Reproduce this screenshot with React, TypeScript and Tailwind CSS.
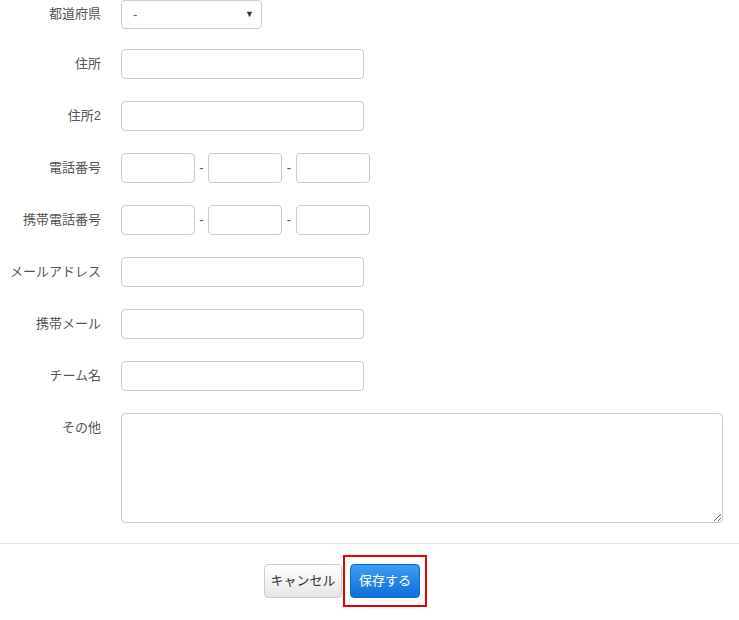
import React from "react";

const font = {
  fontFamily: '"Liberation Sans", "Noto Sans CJK JP", sans-serif',
};

function Label({ children }: { children: React.ReactNode }) {
  return (
    <div className="w-[101px] shrink-0 text-right text-[13px] leading-[16px] pt-[7px] text-[#555]">
      {children}
    </div>
  );
}

function Input({ w }: { w: string }) {
  return (
    <input
      type="text"
      className={`${w} h-[30px] rounded-[4px] border border-[#cccccc] bg-white outline-none`}
    />
  );
}

function Phone() {
  return (
    <div className="ml-[20px] flex items-center">
      <Input w="w-[74px]" />
      <span className="w-[13px] text-center text-[13px] text-[#555]">-</span>
      <Input w="w-[74px]" />
      <span className="w-[14px] text-center text-[13px] text-[#555]">-</span>
      <Input w="w-[74px]" />
    </div>
  );
}

export default function App() {
  return (
    <div className="w-[739px] h-[620px] overflow-hidden bg-white" style={font}>
      <div className="flex flex-col">
        <div className="flex items-start">
          <div className="w-[101px] shrink-0 text-right text-[13px] leading-[16px] pt-[6px] text-[#555]">
            都道府県
          </div>
          <div className="ml-[20px] w-[141px] h-[29px] rounded-[4px] border border-[#cccccc] bg-white flex items-center justify-between pl-[11px] pr-[7px]">
            <span className="text-[13px] text-[#555]">-</span>
            <span className="text-[9px] text-[#333]">▼</span>
          </div>
        </div>

        <div className="flex items-start mt-[20px]">
          <Label>住所</Label>
          <div className="ml-[20px]">
            <Input w="w-[243px]" />
          </div>
        </div>

        <div className="flex items-start mt-[22px]">
          <Label>住所2</Label>
          <div className="ml-[20px]">
            <Input w="w-[243px]" />
          </div>
        </div>

        <div className="flex items-start mt-[22px]">
          <Label>電話番号</Label>
          <Phone />
        </div>

        <div className="flex items-start mt-[22px]">
          <Label>携帯電話番号</Label>
          <Phone />
        </div>

        <div className="flex items-start mt-[22px]">
          <Label>メールアドレス</Label>
          <div className="ml-[20px]">
            <Input w="w-[243px]" />
          </div>
        </div>

        <div className="flex items-start mt-[22px]">
          <Label>携帯メール</Label>
          <div className="ml-[20px]">
            <Input w="w-[243px]" />
          </div>
        </div>

        <div className="flex items-start mt-[22px]">
          <Label>チーム名</Label>
          <div className="ml-[20px]">
            <Input w="w-[243px]" />
          </div>
        </div>

        <div className="flex items-start mt-[22px]">
          <Label>その他</Label>
          <div className="ml-[20px]">
            <textarea className="block w-[602px] h-[110px] rounded-[4px] border border-[#cccccc] bg-white outline-none" />
          </div>
        </div>

        <div className="mt-[20px] h-px bg-[#e5e5e5]" />

        <div className="mt-[20px] flex items-start pl-[264px]">
          <button className="w-[78px] h-[34px] rounded-[4px] border border-[#cccccc] bg-gradient-to-b from-[#ffffff] to-[#e6e6e6] text-[13px] text-[#333]">
            キャンセル
          </button>
          <div className="relative ml-[8px]">
            <button className="w-[70px] h-[34px] rounded-[4px] border border-[#0b6ad0] bg-gradient-to-b from-[#3c9cf5] to-[#0a6fd6] text-[13px] text-white">
              保存する
            </button>
            <span className="absolute left-[-7px] top-[-9px] w-[84px] h-[52px] border-2 border-[#e60000] pointer-events-none" />
          </div>
        </div>
      </div>
    </div>
  );
}
